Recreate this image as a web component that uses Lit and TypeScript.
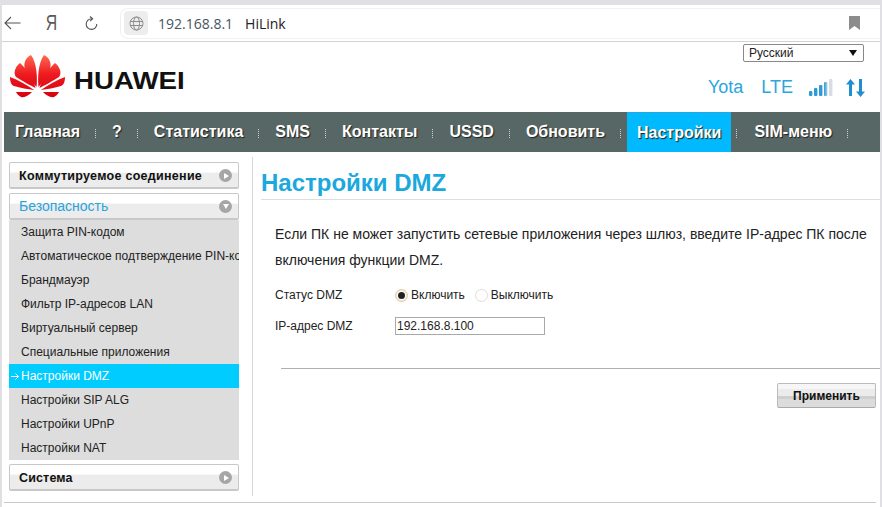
import { LitElement, html, css, svg } from "lit";
import { customElement } from "lit/decorators.js";

const NAV = ["Главная", "?", "Статистика", "SMS", "Контакты", "USSD", "Обновить", "Настройки", "SIM-меню"];
const SUB = ["Защита PIN-кодом", "Автоматическое подтверждение PIN-кода", "Брандмауэр", "Фильтр IP-адресов LAN", "Виртуальный сервер", "Специальные приложения", "Настройки DMZ", "Настройки SIP ALG", "Настройки UPnP", "Настройки NAT"];

const petals = svg`
  <path d="M21 0 C16 2 13 8 15 14 C17 21 22 27 26.5 32 C27.5 24 27 8 21 0Z"/>
  <path d="M10 8 C5 12 3 18 6 22 C11 25 21 31 25.5 33 C23 24 17 14 10 8Z"/>
  <path d="M0 22 C0 26 1 30 4 31 C10 33 18 34 24 35 C17 30 8 25 0 22Z"/>
  <path d="M6 37 L22 37 C19 40 15 43 11 42 C9 41 7 39 6 37Z"/>`;

@customElement("app-root")
export class AppRoot extends LitElement {
  static styles = css`
    :host { display: block; width: 882px; height: 507px; overflow: hidden; background: #dfdfe4; font-family: "Liberation Sans", Arial, sans-serif; color: #111; }
    .frame { box-sizing: border-box; height: 507px; padding: 5px 2px 0 2px; }
    .page { background: #fff; height: 502px; display: flex; flex-direction: column; }
    .chrome { height: 37px; box-sizing: border-box; border-bottom: 1px solid #d2d2d4; background: #fff; display: flex; align-items: center; flex: none; }
    .cbtn { flex: none; display: flex; justify-content: center; }
    .back { width: 17px; margin-left: 2px; }
    .ya { width: 61px; font: 22px/22px "Liberation Sans", sans-serif; color: #5a5a5a; transform: scaleX(0.72); }
    .reload { width: 19px; margin-right: 19px; }
    .addr { flex: 1; height: 31px; box-sizing: border-box; border: 1px solid #f0f1f2; border-right: none; border-radius: 8px 0 0 8px; display: flex; align-items: center; padding-left: 3px; font: 14px "Open Sans", "Liberation Sans", sans-serif; color: #333; }
    .globe { width: 24px; height: 24px; background: #ededed; border-radius: 4px; display: flex; align-items: center; justify-content: center; margin-right: 10px; }
    .host { color: #46555f; margin-right: 12px; }
    .site { color: #222; flex: 1; }
    .mark { margin-right: 20px; display: block; }
    .head { height: 70px; flex: none; display: flex; justify-content: space-between; }
    .logo { display: flex; align-items: flex-start; padding: 13px 0 0 8px; }
    .logotext { font: bold 24.5px/1 "Liberation Sans", Arial, sans-serif; color: #111; margin: 14px 0 0 9px; transform: scaleX(1.13); transform-origin: left center; }
    .hright { display: flex; flex-direction: column; align-items: flex-end; padding: 2px 15px 0 0; }
    .lang { box-sizing: border-box; width: 121px; height: 18px; border: 1px solid #888; border-radius: 2px; font-size: 12px; line-height: 16px; padding-left: 5px; display: flex; justify-content: space-between; align-items: center; color: #222; margin-right: 1px; }
    .lang i { width: 0; height: 0; border: 4px solid transparent; border-top: 6px solid #111; border-bottom: 0; margin-right: 6px; }
    .status { display: flex; align-items: center; color: #2ba6de; font-size: 18px; margin-top: 15px; }
    .op { margin-right: 18px; }
    .lte { margin-right: 16px; }
    .arrows { margin-left: 13px; display: block; }
    nav { height: 40px; background: #566765; margin-left: 2px; display: flex; align-items: stretch; flex: none; padding-left: 11px; }
    .ni { display: flex; align-items: center; font: bold 16px "Liberation Sans", Arial, sans-serif; color: #fff; text-shadow: 1px 1px 1px #222; white-space: nowrap; }
    .ni.on { background: #00b9ff; border-top: 1px solid #2aa6da; box-sizing: border-box; padding: 0 10px; }
    .sep { width: 0; border-left: 1px dotted #ccd; height: 9px; align-self: center; margin: 2px 16px 0 15px; }
    .sep.near { margin-right: 6px; }
    .sep.after { margin-left: 5px; margin-right: 17px; }
    .body { flex: 1; display: flex; min-height: 0; }
    .side { width: 230px; flex: none; margin: 10px 0 0 7px; }
    .acc { box-sizing: border-box; height: 27px; border: 1px solid #c8c8c8; border-bottom-width: 2px; border-radius: 2px; background: linear-gradient(#fff 0 38%, #ececec 42% 100%); display: flex; align-items: center; justify-content: space-between; padding: 1px 6px 0 9px; font: bold 12.5px "Liberation Sans", Arial, sans-serif; color: #111; letter-spacing: 0.28px; }
    .acc.open { color: #2aa4da; font-weight: normal; font-size: 14px; letter-spacing: 0; margin-top: 4px; padding-top: 0; }
    .acc.last { margin-top: 4px; letter-spacing: 0.15px; }
    .dot { width: 13px; height: 13px; border-radius: 50%; background: #a6a6a6; display: flex; align-items: center; justify-content: center; flex: none; }
    .dot i { width: 0; height: 0; border: 3.5px solid transparent; border-left: 5px solid #fff; border-right: 0; margin-left: 1px; }
    .dot.down i { border: 3.5px solid transparent; border-top: 5px solid #fff; border-bottom: 0; margin: 1px 0 0 0; }
    .sub { background: #dddddd; overflow: hidden; }
    .si { height: 24px; line-height: 24px; font-size: 12px; padding-left: 12px; color: #222; white-space: nowrap; position: relative; }
    .si.on { background: #00ccff; color: #fff; }
    .arrow { position: absolute; left: 2px; top: 9px; display: block; }
    .main { flex: 1; border-left: 1px solid #d6d6d6; margin: 5px 0 6px 13px; min-width: 0; padding-left: 8px; }
    h1 { margin: 11px 0 0 0; font: bold 24px/29px "Liberation Sans", Arial, sans-serif; color: #1ba8dd; height: 31px; border-bottom: 1px solid #dedede; }
    .desc { margin: 21px 0 0 14px; font-size: 14px; line-height: 26px; color: #222; width: 600px; }
    .row { display: flex; align-items: center; margin-left: 14px; font-size: 12px; color: #222; height: 18px; }
    .row.a { margin-top: 13px; }
    .row.b { margin-top: 13px; }
    .lbl { width: 120px; flex: none; }
    .radio { box-sizing: border-box; width: 13px; height: 13px; border-radius: 50%; margin-right: 3px; border: 1px solid #ddd; background: #fff; display: flex; align-items: center; justify-content: center; flex: none; }
    .radio.on { border-color: #dcc9a4; box-shadow: 0 0 0 1px #f3e7cf inset; }
    .radio.on i { width: 7px; height: 7px; border-radius: 50%; background: #222; }
    .opt { display: flex; align-items: center; margin-right: 10px; }
    .ipbox { box-sizing: border-box; width: 150px; height: 18px; border: 1px solid #a9a9a9; padding-left: 1px; line-height: 16px; font-size: 12px; color: #222; }
    .rule { border-top: 1px solid #b0b0b0; margin: 33px 0 0 20px; }
    .actions { display: flex; justify-content: flex-end; padding: 14px 4px 0 0; }
    .apply { box-sizing: border-box; width: 99px; height: 25px; border: 1px solid #bbb; border-bottom-color: #aaa; border-radius: 2px; background: linear-gradient(#f6f6f6 0 20%, #ebebeb 20% 52%, #cfcfcf 52% 64%, #dcdcdc 64%); display: flex; align-items: center; justify-content: center; font: bold 12px "Liberation Sans", Arial, sans-serif; color: #111; }
    .foot { border-top: 1px solid #c8c8c8; margin: 0 4px 0 2px; height: 4px; flex: none; background: #fff; }
  `;

  render() {
    return html`<div class="frame"><div class="page">
      <div class="chrome">
        <div class="cbtn back"><svg width="17" height="14" viewBox="0 0 17 14" fill="none" stroke="#555" stroke-width="1.1"><path d="M16.5 7H1M7 1 1 7l6 6"/></svg></div>
        <div class="cbtn ya">Я</div>
        <div class="cbtn reload"><svg width="13" height="15" viewBox="0 0 13 15" fill="none" stroke="#555" stroke-width="1.1"><path d="M6.5 2.8A5.3 5.3 0 1 0 11.8 8M5 .5l2.7 2.3L5 5.2"/></svg></div>
        <div class="addr">
          <div class="globe"><svg width="15" height="15" viewBox="0 0 15 15" fill="none" stroke="#8d8d8d" stroke-width="1"><circle cx="7.5" cy="7.5" r="6.5"/><ellipse cx="7.5" cy="7.5" rx="3" ry="6.5"/><path d="M1.2 5.5h12.6M1.2 9.5h12.6"/></svg></div>
          <span class="host">192.168.8.1</span><span class="site">HiLink</span>
          <svg class="mark" width="11" height="14" viewBox="0 0 11 14"><path d="M0 0h11v14L5.5 10 0 14Z" fill="#8c8c8c"/></svg>
        </div>
      </div>
      <div class="head">
        <div class="logo">
          <svg width="55" height="43" viewBox="0 0 55 43"><defs><linearGradient id="pg" gradientUnits="userSpaceOnUse" x1="0" y1="0" x2="0" y2="43"><stop offset="0" stop-color="#ff6a50"/><stop offset="0.45" stop-color="#ee1a20"/><stop offset="1" stop-color="#d4000f"/></linearGradient></defs>
            <g fill="url(#pg)">${petals}</g>
            <g fill="url(#pg)" transform="translate(55 0) scale(-1 1)">${petals}</g>
          </svg>
          <div class="logotext">HUAWEI</div>
        </div>
        <div class="hright">
          <div class="lang"><span>Русский</span><i></i></div>
          <div class="status">
            <span class="op">Yota</span><span class="lte">LTE</span>
            <svg width="24" height="17" viewBox="0 0 24 17"><defs><linearGradient id="bf"><stop offset="0" stop-color="#2d9bd6"/><stop offset="1" stop-color="#a8cfe8"/></linearGradient></defs><rect x="0" y="12" width="3.4" height="5" rx="1" fill="#2d9bd6"/><rect x="5" y="9" width="3.4" height="8" rx="1" fill="#2d9bd6"/><rect x="10" y="6" width="3.4" height="11" rx="1" fill="#2d9bd6"/><rect x="15" y="3" width="3.4" height="14" rx="1" fill="url(#bf)"/><rect x="20" y="0" width="3.4" height="17" rx="1" fill="#d8dde2"/></svg>
            <svg class="arrows" width="19" height="18" viewBox="0 0 19 18" fill="#1f8fd0"><path d="M4.5 0 9 5.5H6V17H3V5.5H0Z"/><path d="M14.5 18 10 12.5h3V0h3v12.5h3Z"/></svg>
          </div>
        </div>
      </div>
      <nav>
        ${NAV.map((n, i) => html`<div class="ni ${n === "Настройки" ? "on" : ""}">${n}</div><div class="sep ${i === 6 ? "near" : ""} ${i === 7 ? "after" : ""}"></div>`)}
      </nav>
      <div class="body">
        <div class="side">
          <div class="acc"><span>Коммутируемое соединение</span><span class="dot"><i></i></span></div>
          <div class="acc open"><span>Безопасность</span><span class="dot down"><i></i></span></div>
          <div class="sub">${SUB.map((s) => html`<div class="si ${s === "Настройки DMZ" ? "on" : ""}">${s === "Настройки DMZ" ? html`<svg class="arrow" width="8" height="7" viewBox="0 0 8 7" fill="none" stroke="#fff" stroke-width="1"><path d="M0 3.5h7.5M4.5.5l3 3-3 3"/></svg>` : ""}${s}</div>`)}</div>
          <div class="acc last"><span>Система</span><span class="dot"><i></i></span></div>
        </div>
        <div class="main">
          <h1>Настройки DMZ</h1>
          <p class="desc">Если ПК не может запустить сетевые приложения через шлюз, введите IP-адрес ПК после включения функции DMZ.</p>
          <div class="row a"><span class="lbl">Статус DMZ</span>
            <span class="opt"><span class="radio on"><i></i></span>Включить</span>
            <span class="opt"><span class="radio"></span>Выключить</span>
          </div>
          <div class="row b"><span class="lbl">IP-адрес DMZ</span><div class="ipbox">192.168.8.100</div></div>
          <div class="rule"></div>
          <div class="actions"><div class="apply">Применить</div></div>
        </div>
      </div>
      <div class="foot"></div>
    </div></div>`;
  }
}
